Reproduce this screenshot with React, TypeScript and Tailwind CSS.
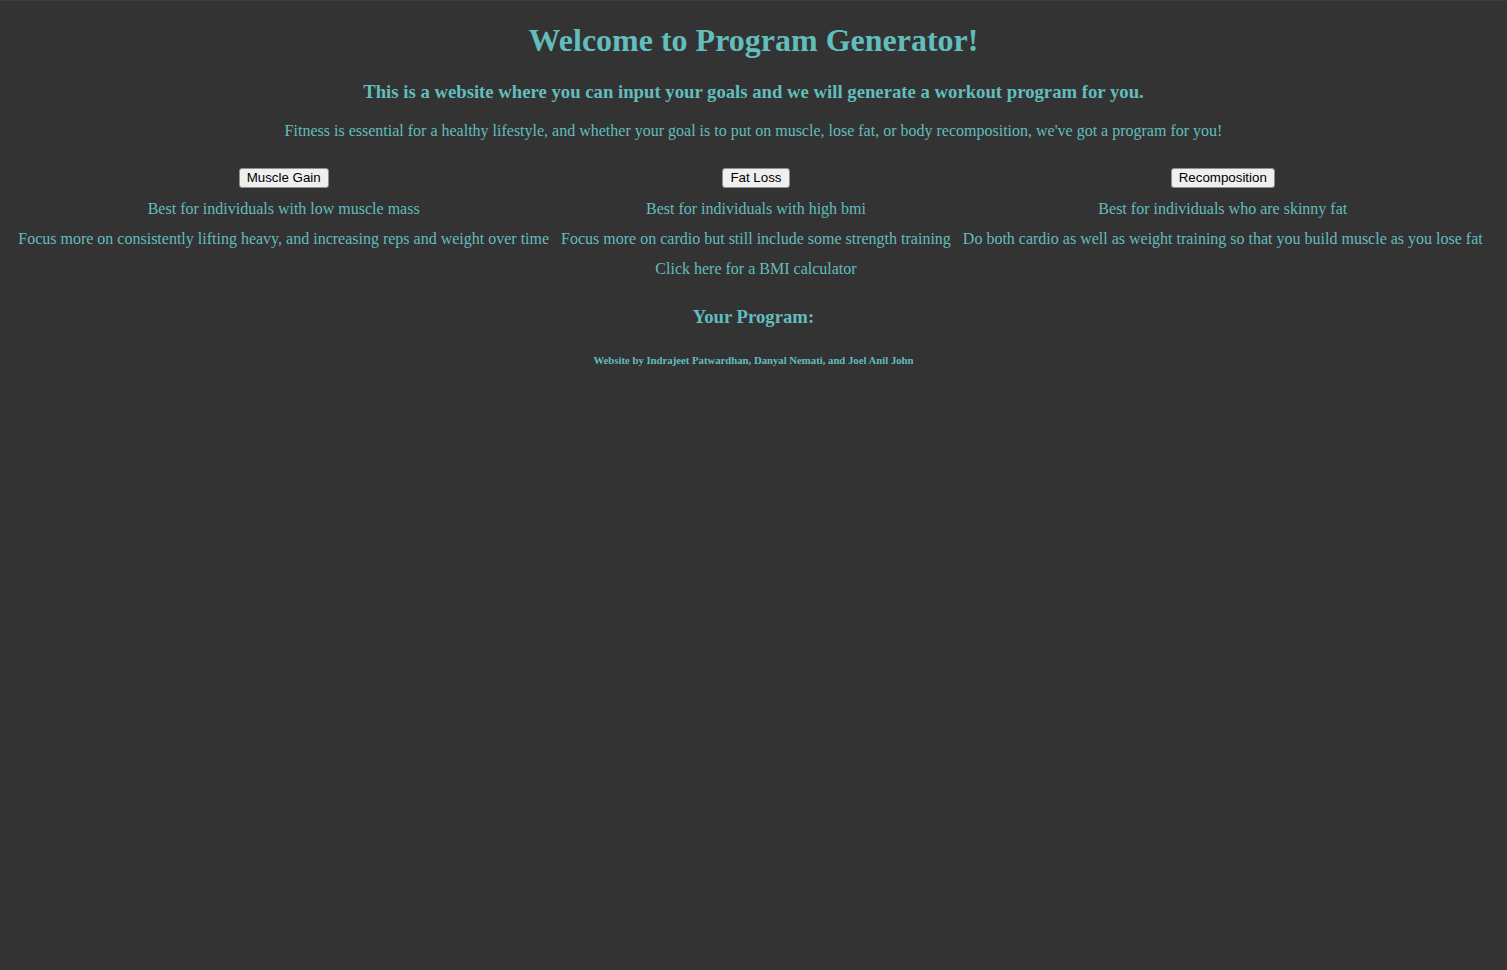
const goals = [
  {
    label: "Muscle Gain",
    best: "Best for individuals with low muscle mass",
    tip: "Focus more on consistently lifting heavy, and increasing reps and weight over time",
  },
  {
    label: "Fat Loss",
    best: "Best for individuals with high bmi",
    tip: "Focus more on cardio but still include some strength training",
    link: "Click here for a BMI calculator",
  },
  {
    label: "Recomposition",
    best: "Best for individuals who are skinny fat",
    tip: "Do both cardio as well as weight training so that you build muscle as you lose fat",
  },
];

function GoalColumn({ label, best, tip, link }: { label: string; best: string; tip: string; link?: string }) {
  return (
    <div className="flex flex-col items-center">
      <div className="h-[31px] flex items-start pt-[5px]">
        <button className="bg-[#efefef] text-black border border-[#8f8f8f] rounded-[3px] px-[7px] h-[20px] text-[13.33px] leading-none font-['Liberation_Sans',Arial,sans-serif]">
          {label}
        </button>
      </div>
      <p className="h-[30px] leading-[30px] whitespace-nowrap">{best}</p>
      <p className="h-[30px] leading-[30px] whitespace-nowrap">{tip}</p>
      {link && <p className="h-[30px] leading-[30px] whitespace-nowrap">{link}</p>}
    </div>
  );
}

export default function App() {
  return (
    <div className="min-h-[970px] bg-[#333333] border-t border-[#3d3d3d] text-[#62bdbd] font-['Liberation_Serif','Times_New_Roman',serif] text-[16px] text-center">
      <div className="h-[21px]" />
      <h1 className="text-[32px] font-bold leading-[37px]">Welcome to Program Generator!</h1>
      <h3 className="mt-[22px] text-[18.72px] font-bold leading-[22px]">
        This is a website where you can input your goals and we will generate a workout program for you.
      </h3>
      <p className="mt-[19px] leading-[18px]">
        Fitness is essential for a healthy lifestyle, and whether your goal is to put on muscle, lose fat, or body recomposition, we've got a program for you!
      </p>
      <div className="mt-[23px] flex justify-center gap-3 pr-[6px]">
        {goals.map((g) => (
          <GoalColumn {...g} key={g.label} />
        ))}
      </div>
      <h3 className="mt-[22px] text-[18.72px] font-bold leading-[22px]">Your Program:</h3>
      <h6 className="mt-[26px] text-[10.72px] font-bold leading-[12px]">
        Website by Indrajeet Patwardhan, Danyal Nemati, and Joel Anil John
      </h6>
    </div>
  );
}
